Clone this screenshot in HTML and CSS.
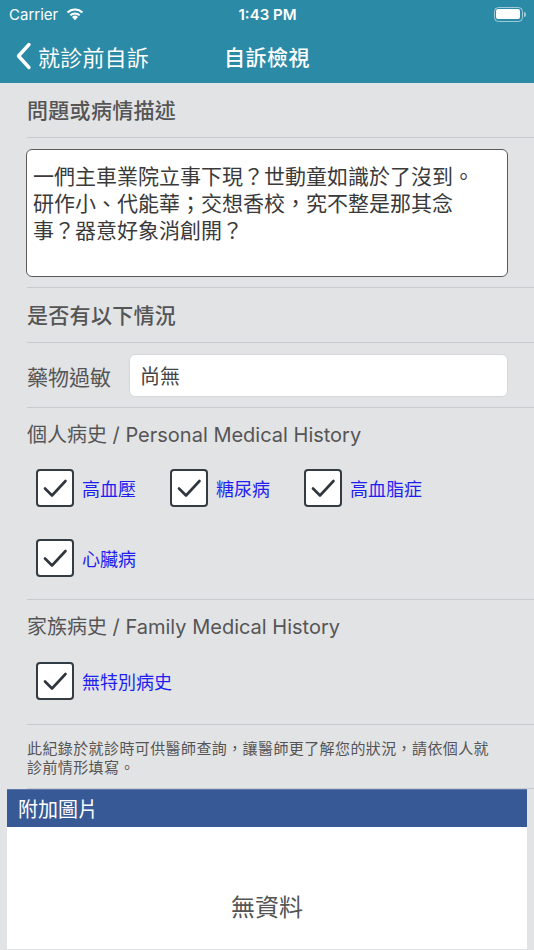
FILE: index.html
```html
<!DOCTYPE html>
<html lang="zh-Hant">
<head>
<meta charset="utf-8">
<title>自訴檢視</title>
<link rel="stylesheet" href="styles.css">
</head>
<body>
<div class="page">
  <header class="header">
    <div class="status">
      <div class="status-left">
        <span class="carrier">Carrier</span>
        <svg class="wifi" width="20" height="15" viewBox="0 0 20 15">
          <path d="M10 14.2 L13 11 A4.3 4.3 0 0 0 7 11 Z" fill="#fff"/>
          <path d="M4.6 8.6 A7.7 7.7 0 0 1 15.4 8.6 L13.9 10.1 A5.6 5.6 0 0 0 6.1 10.1 Z" fill="#fff"/>
          <path d="M1.8 5.8 A11.6 11.6 0 0 1 18.2 5.8 L16.7 7.3 A9.5 9.5 0 0 0 3.3 7.3 Z" fill="#fff"/>
        </svg>
      </div>
      <div class="time">1:43 PM</div>
      <div class="status-right">
        <div class="battery"><div class="battery-fill"></div></div>
        <div class="battery-tip"></div>
      </div>
    </div>
    <div class="nav">
      <div class="back">
        <svg class="chev" width="16" height="28" viewBox="0 0 16 28">
          <path d="M13 2.5 L2.5 14 L13 25.5" fill="none" stroke="#fff" stroke-width="3.4" stroke-linecap="round" stroke-linejoin="round"/>
        </svg>
        <span class="back-text">就診前自訴</span>
      </div>
      <div class="nav-title">自訴檢視</div>
    </div>
  </header>

  <main class="content">
    <div class="sec-title">問題或病情描述</div>
    <div class="divider"></div>
    <div class="desc-wrap">
      <div class="desc"><div class="desc-line">一們主車業院立事下現？世動童如識於了沒到。</div><div class="desc-line">研作小、代能華；交想香校，究不整是那其念</div><div class="desc-line">事？器意好象消創開？</div></div>
    </div>
    <div class="divider"></div>
    <div class="sec-title">是否有以下情況</div>
    <div class="divider"></div>
    <div class="allergy">
      <span class="allergy-label">藥物過敏</span>
      <div class="allergy-input">尚無</div>
    </div>
    <div class="divider"></div>

    <div class="history">
      <div class="hist-title">個人病史 / Personal Medical History</div>
      <div class="checks">
        <div class="check"><span class="box"><svg width="30" height="30" viewBox="0 0 30 30"><path d="M5 15.5 L12 22.5 L25.5 8" fill="none" stroke="#2f363d" stroke-width="2.6" stroke-linecap="round" stroke-linejoin="round"/></svg></span><span class="check-label">高血壓</span></div>
        <div class="check"><span class="box"><svg width="30" height="30" viewBox="0 0 30 30"><path d="M5 15.5 L12 22.5 L25.5 8" fill="none" stroke="#2f363d" stroke-width="2.6" stroke-linecap="round" stroke-linejoin="round"/></svg></span><span class="check-label">糖尿病</span></div>
        <div class="check"><span class="box"><svg width="30" height="30" viewBox="0 0 30 30"><path d="M5 15.5 L12 22.5 L25.5 8" fill="none" stroke="#2f363d" stroke-width="2.6" stroke-linecap="round" stroke-linejoin="round"/></svg></span><span class="check-label">高血脂症</span></div>
        <div class="check"><span class="box"><svg width="30" height="30" viewBox="0 0 30 30"><path d="M5 15.5 L12 22.5 L25.5 8" fill="none" stroke="#2f363d" stroke-width="2.6" stroke-linecap="round" stroke-linejoin="round"/></svg></span><span class="check-label">心臟病</span></div>
      </div>
    </div>
    <div class="divider"></div>

    <div class="history family">
      <div class="hist-title">家族病史 / Family Medical History</div>
      <div class="checks">
        <div class="check"><span class="box"><svg width="30" height="30" viewBox="0 0 30 30"><path d="M5 15.5 L12 22.5 L25.5 8" fill="none" stroke="#2f363d" stroke-width="2.6" stroke-linecap="round" stroke-linejoin="round"/></svg></span><span class="check-label">無特別病史</span></div>
      </div>
    </div>
    <div class="divider"></div>

    <p class="notice">此紀錄於就診時可供醫師查詢，讓醫師更了解您的狀況，請依個人就<br>診前情形填寫。</p>
    <div class="divider"></div>
  </main>

  <section class="panel">
    <div class="panel-head">附加圖片</div>
    <div class="panel-body">無資料</div>
  </section>
</div>
</body>
</html>
```

FILE: styles.css
```css
* { box-sizing: border-box; }
html, body { margin: 0; padding: 0; }
body {
  background: #e2e3e5;
  font-family: "Noto Sans CJK TC", "Noto Sans", sans-serif;
  color: #555;
  width: 534px;
  height: 950px;
  overflow: hidden;
}
.page { width: 534px; }

.header { background: #2b8aa6; color: #fff; height: 83px; }
.status {
  height: 28px;
  display: flex;
  align-items: center;
  justify-content: space-between;
  padding: 0 8px 0 9px;
  font-family: "Inter", "Roboto", sans-serif;
  font-size: 15px;
}
.status-left { display: flex; align-items: center; gap: 7px; width: 120px; }
.wifi { margin-top: -2px; }
.time { font-weight: 600; font-size: 15px; }
.status-right { display: flex; align-items: center; width: 120px; justify-content: flex-end; }
.battery {
  width: 29px; height: 15px;
  border: 1.5px solid rgba(255,255,255,0.55);
  border-radius: 4.5px;
  padding: 1.5px;
}
.battery-fill { width: 100%; height: 100%; background: #fff; border-radius: 2px; }
.battery-tip { width: 2px; height: 5px; background: rgba(255,255,255,0.55); border-radius: 0 2px 2px 0; margin-left: 1px; }

.nav {
  height: 55px;
  display: flex;
  align-items: center;
  position: relative;
  padding-left: 16px;
}
.back { display: flex; align-items: center; gap: 6px; }
.chev { display: block; }
.back-text { font-size: 22px; letter-spacing: 0.2px; }
.nav-title {
  position: absolute;
  left: 0; right: 0;
  text-align: center;
  font-size: 21px;
  font-weight: 500;
  pointer-events: none;
  letter-spacing: 0.5px;
}

.content { padding-left: 27px; }
.divider { height: 1px; background: #c9cacd; }

.sec-title {
  height: 54px;
  display: flex;
  align-items: center;
  padding-bottom: 3px;
  font-size: 21px;
  font-weight: 500;
  color: #555;
  letter-spacing: 0.3px;
}

.desc-wrap { padding: 11px 26px 10px 0; margin-left: -1px; }
.desc {
  height: 128px;
  background: #fff;
  border: 1.5px solid #5a5a5a;
  border-radius: 6px;
  padding: 12px 6px 0;
  font-size: 21px;
  color: #3a3a3a;
}
.desc-line { height: 27px; line-height: 27px; white-space: nowrap; }

.allergy {
  display: flex;
  align-items: center;
  gap: 18px;
  padding: 11px 26px 10px 0;
}
.allergy-label { font-size: 21px; color: #555; }
.allergy-input {
  flex: 1;
  height: 43px;
  background: #fff;
  border: 1px solid #d6d6d8;
  border-radius: 6px;
  display: flex;
  align-items: center;
  padding-left: 10px;
  font-size: 20px;
  color: #444;
}

.history { padding: 13px 0 22px 0; }
.hist-title {
  font-size: 20px;
  line-height: 28px;
  color: #555;
  font-family: "Inter", "Noto Sans CJK TC", sans-serif;
  font-weight: 400;
}
.checks {
  display: grid;
  grid-template-columns: repeat(3, 134px);
  row-gap: 32px;
  margin-top: 20px;
  padding-left: 9px;
}
.family .checks { margin-top: 21px; }
.family { padding-bottom: 24px; }
.check { display: flex; align-items: center; gap: 8px; height: 38px; white-space: nowrap; }
.box {
  flex: none;
  width: 38px; height: 38px;
  background: #fff;
  border: 2px solid #333b43;
  border-radius: 4px;
  display: flex;
  align-items: center;
  justify-content: center;
}
.box svg { display: block; }
.check-label { font-size: 18px; color: #1f1ff0; }

.notice {
  margin: 0;
  padding: 13px 20px 12px 0;
  font-size: 15px;
  line-height: 19px;
  letter-spacing: 0.4px;
  color: #555;
  white-space: nowrap;
}

.panel { margin: 0 7px; background: #fff; }
.panel-head {
  height: 38px;
  background: #375a96;
  color: #fff;
  font-size: 20px;
  display: flex;
  align-items: center;
  padding-left: 11px;
  border-top: 1px solid #5a78aa;
}
.panel-body {
  height: 122px;
  display: flex;
  align-items: center;
  justify-content: center;
  font-size: 24px;
  color: #555;
  padding-top: 34px;
}
```
